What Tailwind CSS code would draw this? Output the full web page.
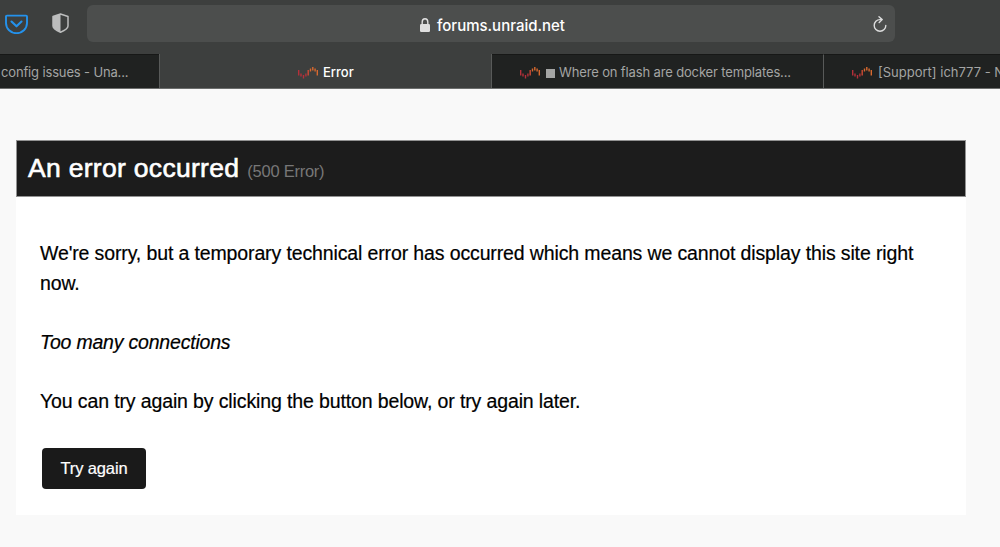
<!DOCTYPE html>
<html lang="en">
<head>
    <meta charset="UTF-8">
    <meta name="viewport" content="width=device-width, initial-scale=1.0">
    <title>Error</title>
    <script src="https://cdn.jsdelivr.net/npm/@tailwindcss/browser@4"></script>
</head>
<body class="h-[547px] overflow-hidden bg-[#f9f9f9] font-['Liberation_Sans',Arial,sans-serif]">
    <svg class="hidden">
        <symbol id="unraid" viewBox="0 0 20 12">
            <g fill="none" stroke-width="1.400">
                <path stroke="#b5303a" d="M.7 3v5.500M3 6.500v3M5.500 8v3.500M7.900 6.500v3" />
                <path stroke="#cf4a35" d="M10.200 3v5.500" />
                <path stroke="#d8692f" d="M12.500 1.500v3M14.800 0v3.500M17.100 1.500v3M19.300 3v5.500" />
            </g>
        </symbol>
    </svg>

    <!-- Toolbar -->
    <div class="flex h-[54px] items-start bg-[#3d3f3e]">
        <svg class="mt-[14px] ml-[5px] h-5 w-[23px] shrink-0" viewBox="0 0 23 20" fill="none" stroke="#2492ec" stroke-linecap="round" stroke-linejoin="round">
            <path stroke-width="1.900" d="M2 1.600h19q1 0 1 1V9a10.500 10.200 0 0 1-21 0V2.600q0-1 1-1z" />
            <path stroke-width="2.100" d="M6.500 7.500l5 4.800 5-4.800" />
        </svg>
        <svg class="mt-[13px] ml-6 h-5 w-[17px] shrink-0" viewBox="0 0 17 20">
            <path fill="none" stroke="#bcbdbd" stroke-width="1.500" stroke-linejoin="round" d="M8.500 1L16 3.500V13q0 3-7.500 6.200Q1 16 1 13V3.500z" />
            <path fill="#bcbdbd" d="M8.500 1L1 3.500V13q0 3 7.500 6.200z" />
        </svg>
        <div class="mt-[5px] ml-[18px] flex h-[37px] w-[808px] items-center rounded-md bg-[#4c4e4d]">
            <svg class="mt-[2px] ml-[333px] h-[14px] w-[10px] shrink-0" viewBox="0 0 10 14">
                <rect y="6" width="10" height="8" rx="1.200" fill="#dfdfdf" />
                <path fill="none" stroke="#dfdfdf" stroke-width="1.400" d="M2.200 6.500V4a2.800 3.200 0 0 1 5.600 0v2.500" />
            </svg>
            <span class="mt-[5px] ml-[7px] w-[128px] font-[Inter,sans-serif] text-[15px] font-medium whitespace-nowrap text-white">forums.unraid.net</span>
            <svg class="mt-px ml-[308px] h-4 w-[14px] shrink-0" viewBox="0 0 14 16" fill="none" stroke="#dcdddd" stroke-width="1.400" stroke-linecap="round" stroke-linejoin="round">
                <path d="M8.500 3.600H7A5.800 5.800 0 1 0 12.800 9.400" />
                <path d="M6 .8l3.200 2.800L6.200 6.400" />
            </svg>
        </div>
    </div>

    <!-- Tabs -->
    <div class="flex h-[35px] border-b border-[#6c6e6d] bg-[#202221] font-[Inter,sans-serif] text-[13px] text-[#a4a5a4]">
        <div class="flex w-[159px] items-center border-t border-[#171817] pt-[3px] pl-px tracking-[-0.15px] whitespace-nowrap">config issues - Una...</div>
        <div class="flex w-[333px] items-center border-x border-[#585a59] bg-[#3d3f3e] pt-[3px] pl-[138px] font-medium text-white">
            <svg class="mr-[5px] h-3 w-5"><use href="#unraid" /></svg>
            <span>Error</span>
        </div>
        <div class="flex w-[332px] items-center border-t border-r border-t-[#171817] border-r-[#585a59] pt-[3px] pl-7 tracking-[-0.140px] whitespace-nowrap">
            <svg class="mr-[6px] h-3 w-5"><use href="#unraid" /></svg>
            <span class="mr-1 size-[9px] bg-[#a4a5a4]"></span>
            <span>Where on flash are docker templates...</span>
        </div>
        <div class="flex w-[176px] items-center overflow-hidden border-t border-[#171817] pt-[3px] pl-7 whitespace-nowrap">
            <svg class="mr-[6px] h-3 w-5 shrink-0"><use href="#unraid" /></svg>
            <span>[Support] ich777 - N</span>
        </div>
    </div>

    <!-- Error page -->
    <main class="mt-[51px] ml-4 h-[375px] w-[950px] bg-white">
        <h1 class="flex h-[57px] items-baseline border border-[#929292] bg-[#1c1c1c] pt-[8px] pl-[11px] text-[26.500px] text-white">
            <span class="tracking-[0.3px] [-webkit-text-stroke:0.6px_white]">An error occurred</span>
            <span class="ml-2 text-[16.500px] tracking-[-0.250px] text-[#777]">(500 Error)</span>
        </h1>
        <div class="px-6 pt-[42px] text-[19.500px] leading-[29.700px] tracking-[-0.127px] text-black [-webkit-text-stroke:0.2px_black]">
            <p class="whitespace-nowrap">We're sorry, but a temporary technical error has occurred which means we cannot display this site right<br>now.</p>
            <p class="mt-[29.700px] tracking-[-0.200px] italic">Too many connections</p>
            <p class="mt-[29.700px]">You can try again by clicking the button below, or try again later.</p>
            <button class="mt-[31px] ml-[2px] block h-[41px] w-[104px] rounded bg-[#1a1a1a] text-[16.500px] text-white [-webkit-text-stroke:0.2px_white]">Try again</button>
        </div>
    </main>
</body>
</html>
